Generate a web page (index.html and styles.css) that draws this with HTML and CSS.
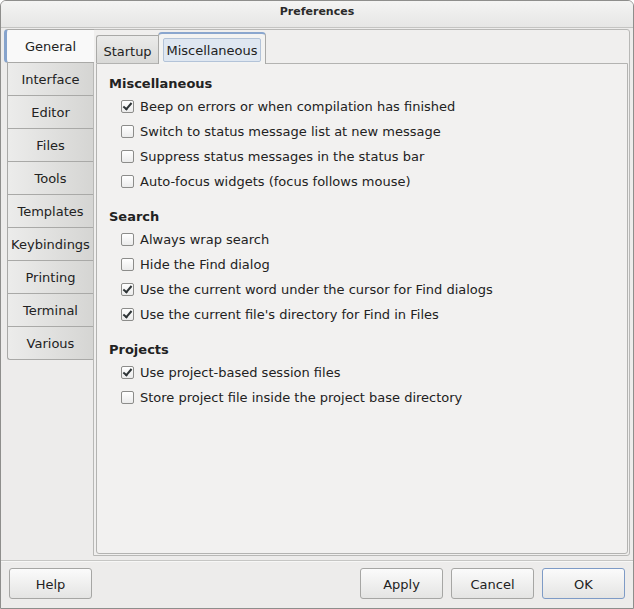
FILE: index.html
```html
<!DOCTYPE html>
<html>
<head>
<meta charset="utf-8">
<link rel="stylesheet" href="styles.css">
</head>
<body>
<div class="window">
  <div class="titlebar">Preferences</div>
  <div class="main">
    <div class="sidetabs">
      <div class="stab active">General</div>
      <div class="stab">Interface</div>
      <div class="stab">Editor</div>
      <div class="stab">Files</div>
      <div class="stab">Tools</div>
      <div class="stab">Templates</div>
      <div class="stab">Keybindings</div>
      <div class="stab">Printing</div>
      <div class="stab">Terminal</div>
      <div class="stab">Various</div>
    </div>
    <div class="outer">
      <div class="toptabs">
        <div class="ttab">Startup</div>
        <div class="ttab active"><span class="focus">Miscellaneous</span></div>
      </div>
      <div class="page">
        <div class="section">
          <div class="heading">Miscellaneous</div>
          <div class="check"><span class="box on"></span>Beep on errors or when compilation has finished</div>
          <div class="check"><span class="box"></span>Switch to status message list at new message</div>
          <div class="check"><span class="box"></span>Suppress status messages in the status bar</div>
          <div class="check"><span class="box"></span>Auto-focus widgets (focus follows mouse)</div>
        </div>
        <div class="section">
          <div class="heading">Search</div>
          <div class="check"><span class="box"></span>Always wrap search</div>
          <div class="check"><span class="box"></span>Hide the Find dialog</div>
          <div class="check"><span class="box on"></span>Use the current word under the cursor for Find dialogs</div>
          <div class="check"><span class="box on"></span>Use the current file's directory for Find in Files</div>
        </div>
        <div class="section">
          <div class="heading">Projects</div>
          <div class="check"><span class="box on"></span>Use project-based session files</div>
          <div class="check"><span class="box"></span>Store project file inside the project base directory</div>
        </div>
      </div>
    </div>
  </div>
  <div class="sep"></div>
  <div class="buttons">
    <div class="btn">Help</div>
    <div class="spacer"></div>
    <div class="btn">Apply</div>
    <div class="btn">Cancel</div>
    <div class="btn default">OK</div>
  </div>
</div>
</body>
</html>
```

FILE: styles.css
```css
html, body {
  margin: 0;
  padding: 0;
  background: #ffffff;
}
body {
  font-family: "DejaVu Sans", sans-serif;
  font-size: 13px;
  color: #222222;
}
.window {
  width: 634px;
  height: 609px;
  box-sizing: border-box;
  border: 1px solid #8e8e8c;
  border-radius: 6px 6px 0 0;
  background: #edeceb;
  display: flex;
  flex-direction: column;
  overflow: hidden;
}
.titlebar {
  box-sizing: border-box;
  height: 27px;
  border-bottom: 1px solid #c4c4c2;
  background: linear-gradient(#f4f4f3, #e6e6e5);
  font-weight: bold;
  font-size: 11px;
  line-height: 16px;
  padding-top: 3px;
  text-align: center;
  color: #2a2a2a;
}
.main {
  display: flex;
  padding: 1px 3px 0 3px;
}
.sidetabs {
  width: 89px;
  display: flex;
  flex-direction: column;
  flex-shrink: 0;
}
.stab {
  height: 33px;
  box-sizing: border-box;
  margin-left: 3px;
  border: 1px solid #a9a9a7;
  border-top: none;
  border-right: none;
  background: linear-gradient(to right, #ececeb, #d5d5d3);
  text-align: center;
  line-height: 34px;
}
.stab:nth-child(2) {
  border-top: 1px solid #a9a9a7;
  line-height: 33px;
}
.stab:last-child {
  border-radius: 0 0 0 3px;
}
.stab.active {
  margin-left: 0;
  margin-right: -1px;
  position: relative;
  z-index: 1;
  height: 34px;
  line-height: 34px;
  background: #f9f9f9;
  border: 1px solid #a9a9a7;
  border-left: 3px solid #86a3cc;
  border-right: none;
  border-radius: 4px 0 0 4px;
}
.stab.active + .stab {
  border-top: none;
  line-height: 34px;
}
.outer {
  flex: 1;
  height: 527px;
  box-sizing: border-box;
  border: 1px solid #b8b8b6;
  border-radius: 0 3px 3px 0;
  background: #f0efee;
  padding: 2px 1px 1px 2px;
  display: flex;
  flex-direction: column;
}
.toptabs {
  height: 31px;
  display: flex;
  align-items: flex-end;
  flex-shrink: 0;
}
.ttab {
  height: 28px;
  box-sizing: border-box;
  padding: 0 6px;
  border: 1px solid #a9a9a7;
  border-bottom: none;
  border-right: none;
  border-radius: 3px 0 0 0;
  background: linear-gradient(#ebebea, #d9d9d7);
  line-height: 32px;
  width: 62px;
  text-align: center;
}
.ttab.active {
  width: 108px;
  height: 32px;
  padding: 4px 4px 0 4px;
  border: 1px solid #a9a9a7;
  border-top: 2px solid #8aa6ce;
  border-bottom: none;
  border-radius: 4px 4px 0 0;
  background: #f3f3f2;
  line-height: 20px;
  margin-bottom: -1px;
  position: relative;
  z-index: 1;
}
.focus {
  display: block;
  height: 24px;
  box-sizing: border-box;
  border: 1px solid #b3c3d8;
  border-radius: 2px;
  background: #dfe7f1;
  line-height: 23px;
}
.page {
  flex: 1;
  border: 1px solid #b3b3b1;
  border-radius: 0 0 3px 3px;
  background: #f2f1f0;
  padding: 10px 12px 0 12px;
}
.section {
  margin-bottom: 13px;
}
.heading {
  font-weight: bold;
  line-height: 20px;
  font-size: 13px;
}
.check {
  height: 25px;
  display: flex;
  align-items: center;
  padding-left: 12px;
}
.box {
  width: 13px;
  height: 13px;
  box-sizing: border-box;
  border: 1px solid #8c8c8a;
  border-radius: 2px;
  background: linear-gradient(#ffffff, #ebebeb);
  margin-right: 6px;
  flex-shrink: 0;
  position: relative;
}
.box.on::after {
  content: "";
  position: absolute;
  left: 3px;
  top: 0px;
  width: 3px;
  height: 7px;
  border: solid #2e3436;
  border-width: 0 2px 2px 0;
  transform: rotate(40deg);
}
.sep {
  height: 1px;
  margin-top: 4px;
  background: #c6c6c4;
  border-bottom: 1px solid #f7f7f6;
}
.buttons {
  display: flex;
  margin-top: 6px;
  padding: 0 8px 9px 8px;
  gap: 8px;
}
.spacer {
  flex: 1;
}
.btn {
  width: 83px;
  height: 31px;
  box-sizing: border-box;
  border: 1px solid #a6a6a4;
  border-radius: 3px;
  background: linear-gradient(#fbfbfb, #e4e4e3);
  text-align: center;
  line-height: 31px;
}
.btn.default {
  border-color: #7e9bc6;
}
```
